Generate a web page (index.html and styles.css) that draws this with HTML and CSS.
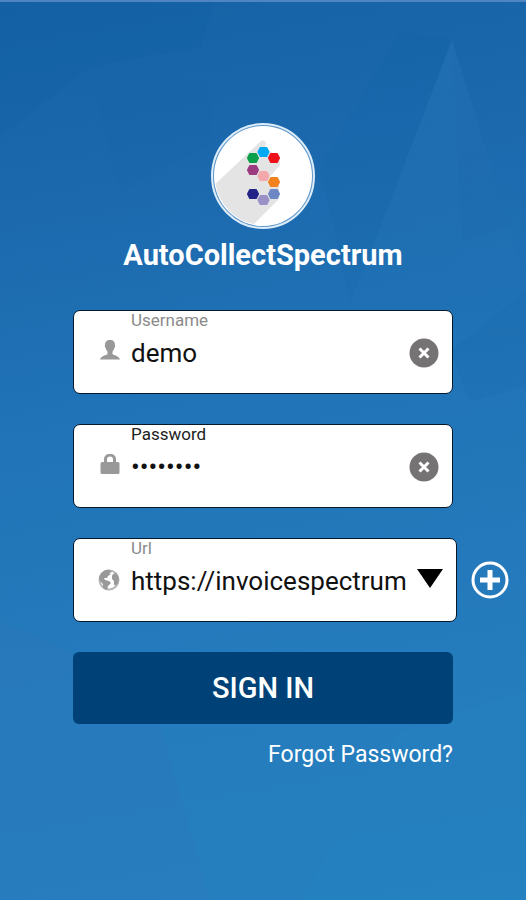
FILE: index.html
```
<!DOCTYPE html>
<html lang="en">
<head>
  <meta charset="UTF-8">
  <meta name="viewport" content="width=device-width, initial-scale=1">
  <title>AutoCollectSpectrum</title>
  <link rel="stylesheet" href="styles.css">
</head>
<body>

  <svg class="facets" viewBox="0 0 526 900" preserveAspectRatio="none" aria-hidden="true">
    <defs>
      <linearGradient id="fade" x1="0" y1="0" x2="0" y2="1">
        <stop offset="0" stop-color="#2b7bbd" stop-opacity=".4"/>
        <stop offset="1" stop-color="#2b7bbd" stop-opacity="0"/>
      </linearGradient>
    </defs>
    <path d="M452 38 L375 240 L352 300 L526 300 L510 225Z" fill="url(#fade)"/>
    <path d="M400 30 L320 165 L350 300 L375 240 L452 38Z" fill="#1460a4" opacity=".12"/>
    <path d="M452 38 L462 240 L510 225Z" fill="#1a68ab" opacity=".15"/>
    <path d="M0 135 L90 65 L200 45 L215 0 L0 0Z" fill="#0e609e" opacity=".15"/>
    <path d="M95 90 L205 78 L215 140 L120 190Z" fill="#1863aa" opacity=".15"/>
    <path d="M526 290 L450 350 L470 400 L526 385Z" fill="#1768aa" opacity=".15"/>
    <path d="M0 620 L150 690 L210 900 L0 900Z" fill="#3179bb" opacity=".25"/>
    <path d="M526 690 L400 730 L300 900 L526 900Z" fill="#2887c2" opacity=".15"/>
  </svg>

  <main>
    <header>
      <svg class="logo" viewBox="0 0 104 106" aria-hidden="true">
        <defs>
          <clipPath id="disc"><ellipse cx="52" cy="53" rx="48" ry="49"/></clipPath>
          <path id="hex" d="M-5 0 L-3 -4 H3 L5 0 L3 4 H-3Z" stroke-width="2" stroke-linejoin="round"/>
        </defs>
        <ellipse cx="52" cy="53" rx="51" ry="52" fill="#5f97cb" stroke="#dcecf8" stroke-width="2"/>
        <ellipse cx="52" cy="53" rx="49" ry="50" fill="#fff"/>
        <g clip-path="url(#disc)">
          <path d="M50 18 Q53 16 55 20 L54 25 L68 34 L69 42 L58 55 L68 62 L68 76 L40 104 L0 104 L0 65Z" fill="#e4e4e5"/>
        </g>
        <use href="#hex" x="52.5" y="29" fill="#00a9f4" stroke="#00a9f4"/>
        <use href="#hex" x="42" y="35" fill="#0ba14b" stroke="#0ba14b"/>
        <use href="#hex" x="63" y="35" fill="#ee101b" stroke="#ee101b"/>
        <use href="#hex" x="42" y="47" fill="#9b3b80" stroke="#9b3b80"/>
        <use href="#hex" x="52.5" y="53" fill="#f3a8ac" stroke="#f3a8ac"/>
        <use href="#hex" x="63" y="59" fill="#f28120" stroke="#f28120"/>
        <use href="#hex" x="42" y="71" fill="#242387" stroke="#242387"/>
        <use href="#hex" x="63" y="71" fill="#6e88c5" stroke="#6e88c5"/>
        <use href="#hex" x="52.5" y="77" fill="#9a91c7" stroke="#9a91c7"/>
      </svg>
      <h1>AutoCollectSpectrum</h1>
    </header>

    <form>
      <div class="field">
        <label for="username">Username</label>
        <svg class="icon" viewBox="0 0 20 20" aria-hidden="true">
          <path d="M10 0 C6.5 0 5 2 5 5 C4.5 5.5 5 7.5 5.7 8 C6 9.5 6.500 10.5 7.5 11.5 V14 C6.5 15.5 1 15.5 0 19.5 H20 C19 15.5 13.5 15.5 12.5 14 V11.5 C13.5 10.5 14 9.5 14.3 8 C15 7.5 15.5 5.5 15 5 C15 2 13.5 0 10 0Z"/>
        </svg>
        <input type="text" id="username" name="username" value="demo">
        <button type="button" class="clear" aria-label="Clear username">
          <svg viewBox="0 0 30 30" aria-hidden="true"><circle cx="15" cy="15" r="14.5"/><path d="M10.5 10.5 L19.5 19.5 M19.5 10.5 L10.5 19.5"/></svg>
        </button>
      </div>

      <div class="field active">
        <label for="password">Password</label>
        <svg class="icon" viewBox="0 0 20 20" aria-hidden="true">
          <path fill-rule="evenodd" d="M4 8 V5.5 C4 2 6 0 10 0 C14 0 16 2 16 5.5 V8 H18 Q19.5 8 19.5 9.5 V18.5 Q19.5 20 18 20 H2 Q.5 20 .5 18.5 V9.5 Q.5 8 2 8Z M7 8 H13 V5.5 C13 3.5 12 2.5 10 2.5 C8 2.5 7 3.5 7 5.5Z"/>
        </svg>
        <input type="password" id="password" name="password" value="demo1234">
        <button type="button" class="clear" aria-label="Clear password">
          <svg viewBox="0 0 30 30" aria-hidden="true"><circle cx="15" cy="15" r="14.5"/><path d="M10.5 10.5 L19.5 19.5 M19.5 10.5 L10.5 19.5"/></svg>
        </button>
      </div>

      <div class="url-row">
        <div class="field">
          <label for="url">Url</label>
          <svg class="icon globe" viewBox="0 0 22 22" aria-hidden="true">
            <circle cx="11" cy="11" r="9.5" fill="#fff" stroke="#b8b8b8" stroke-width="2"/>
            <path d="M2 6 C4 2 8 0 12 1 L14 3 L11 4 L13 5 L10 7 L9 9 L6 9 L7 11 L11 12 L13 14 L10 17 L9 21 L5 19 L5 15 L2 12 L1 9Z"/>
            <path d="M15 5 L18 4 L21 9 L20 14 L17 17 L16 15 L16 12 L14 10 L14 7Z"/>
          </svg>
          <select id="url" name="url">
            <option>https://invoicespectrum</option>
          </select>
          <svg class="arrow" viewBox="0 0 26 20" aria-hidden="true"><path d="M0 0 H26 L13 19Z"/></svg>
        </div>
        <button type="button" class="add" aria-label="Add url">
          <svg viewBox="0 0 38 38" aria-hidden="true"><circle cx="19" cy="19" r="17"/><path d="M19 9 V29 M9 19 H29"/></svg>
        </button>
      </div>

      <button type="submit" class="submit">SIGN IN</button>
      <a href="#" class="forgot">Forgot Password?</a>
    </form>
  </main>

</body>
</html>
```
FILE: styles.css
```
* {
  box-sizing: border-box;
}

body {
  margin: 0;
  min-height: 100vh;
  font-family: Roboto, "Liberation Sans", sans-serif;
  background: linear-gradient(170deg, #1562a5 0%, #1c69ae 22%, #2074b7 45%, #257cbd 75%, #2580bf 100%);
  border-top: 2px solid #4f86c1;
}

.facets {
  position: absolute;
  top: 2px;
  left: 0;
  width: 100%;
  height: calc(100% - 2px);
  pointer-events: none;
}

main {
  position: relative;
  padding: 121px 73px 40px;
}

header {
  display: flex;
  flex-direction: column;
  align-items: center;
}

.logo {
  width: 104px;
  height: 106px;
}

h1 {
  margin: 10px 0 38px;
  font-size: 29px;
  line-height: 33px;
  font-weight: 700;
  color: white;
}

form {
  display: flex;
  flex-direction: column;
  gap: 30px;
}

.field {
  display: grid;
  grid-template-columns: 22px minmax(0, 1fr) 30px;
  grid-template-rows: 18px 47px;
  column-gap: 11px;
  align-items: center;
  height: 84px;
  padding: 0 13px 0 24px;
  background-color: white;
  border: 1px solid #07182a;
  border-radius: 7px;
}

label {
  grid-column: 2 / 4;
  font-size: 17px;
  line-height: 18px;
  color: #8b8b8b;
}

.active label {
  color: #222;
}

.icon {
  grid-column: 1;
  width: 20px;
  height: 20px;
  margin: 0 0 6px 2px;
  fill: #999;
}

.globe {
  width: 22px;
  height: 22px;
  margin: 0 0 2px;
}

input, select {
  width: 100%;
  height: 46px;
  padding: 0;
  font-family: inherit;
  font-size: 26px;
  color: #111;
  background: none;
  border: none;
  border-radius: 0;
  outline: none;
  appearance: none;
}

select {
  width: calc(100% + 4px);
}

button {
  padding: 0;
  border: none;
  background: none;
  cursor: pointer;
}

button svg {
  display: block;
  width: 100%;
}

.clear {
  width: 30px;
  height: 30px;
}

.clear circle {
  fill: #757373;
}

.clear path {
  stroke: white;
  stroke-width: 3;
}

.url-row {
  display: flex;
  align-items: center;
  gap: 14px;
  margin-right: -56px;
}

.url-row .field {
  flex: 1;
  min-width: 0;
  grid-template-columns: 22px minmax(0, 1fr) 26px;
}

.arrow {
  width: 26px;
  height: 20px;
  margin-bottom: 4px;
  pointer-events: none;
}

.add {
  width: 38px;
  height: 38px;
}

.add svg {
  fill: none;
  stroke: white;
  stroke-width: 3;
}

.add path {
  stroke-width: 5;
}

.submit {
  height: 72px;
  font-family: inherit;
  font-size: 29px;
  font-weight: 500;
  color: white;
  background-color: #004277;
  border-radius: 6px;
}

.forgot {
  align-self: flex-end;
  margin-top: -14px;
  font-size: 23px;
  line-height: 30px;
  color: white;
  text-decoration: none;
}
```
